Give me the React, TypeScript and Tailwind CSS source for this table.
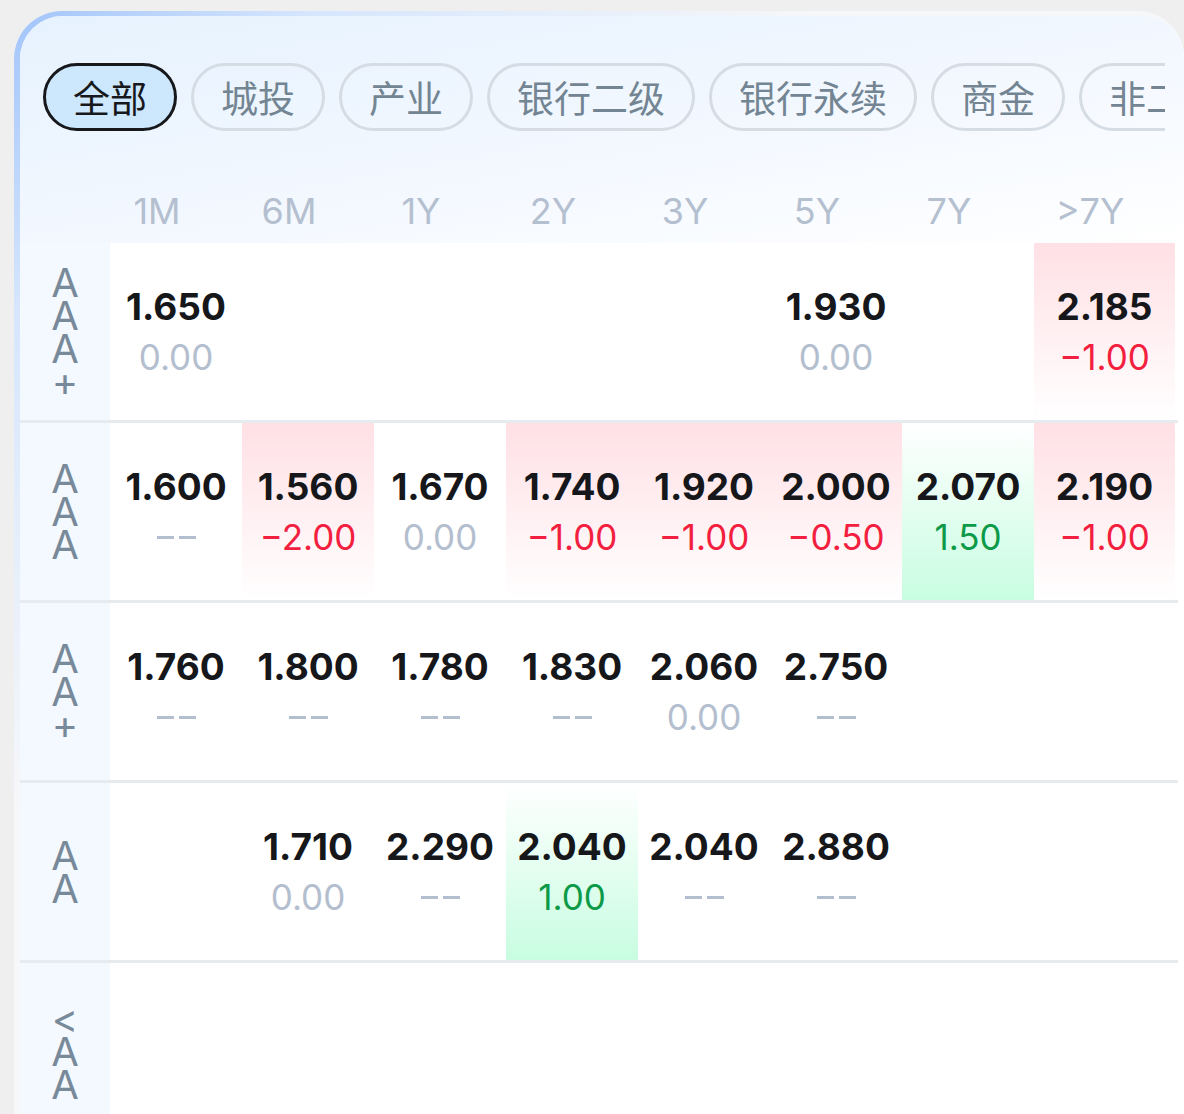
import React from "react";

type Cell = { v: string; d: string; bg?: "red" | "green" } | null;

const tabs = ["全部", "城投", "产业", "银行二级", "银行永续", "商金", "非二永"];
const cols = ["1M", "6M", "1Y", "2Y", "3Y", "5Y", "7Y", ">7Y"];

const rows: { label: string[]; cells: Cell[] }[] = [
  {
    label: ["A", "A", "A", "+"],
    cells: [
      { v: "1.650", d: "0.00" },
      null,
      null,
      null,
      null,
      { v: "1.930", d: "0.00" },
      null,
      { v: "2.185", d: "−1.00", bg: "red" },
    ],
  },
  {
    label: ["A", "A", "A"],
    cells: [
      { v: "1.600", d: "--" },
      { v: "1.560", d: "−2.00", bg: "red" },
      { v: "1.670", d: "0.00" },
      { v: "1.740", d: "−1.00", bg: "red" },
      { v: "1.920", d: "−1.00", bg: "red" },
      { v: "2.000", d: "−0.50", bg: "red" },
      { v: "2.070", d: "1.50", bg: "green" },
      { v: "2.190", d: "−1.00", bg: "red" },
    ],
  },
  {
    label: ["A", "A", "+"],
    cells: [
      { v: "1.760", d: "--" },
      { v: "1.800", d: "--" },
      { v: "1.780", d: "--" },
      { v: "1.830", d: "--" },
      { v: "2.060", d: "0.00" },
      { v: "2.750", d: "--" },
      null,
      null,
    ],
  },
  {
    label: ["A", "A"],
    cells: [
      null,
      { v: "1.710", d: "0.00" },
      { v: "2.290", d: "--" },
      { v: "2.040", d: "1.00", bg: "green" },
      { v: "2.040", d: "--" },
      { v: "2.880", d: "--" },
      null,
      null,
    ],
  },
  {
    label: ["<", "A", "A"],
    cells: [null, null, null, null, null, null, null, null],
  },
];

// sub value colour: falling red, rising green, unchanged grey
const subColor = (d: string) => {
  if (d.startsWith("−")) return "text-[#f2203e]";
  if (d === "0.00" || d === "--") return "text-[#b3bece]";
  return "text-[#0c9a48]";
};

const App = () => {
  return (
    <div className="h-[1114px] w-full overflow-hidden bg-[#efefef] pl-[14px] pt-[11px] font-['Inter','Noto_Sans_CJK_SC',sans-serif]">
      {/* card border layer */}
      <div className="h-[1140px] rounded-tl-[48px] rounded-tr-[46px] rounded-bl-[40px] bg-[radial-gradient(circle_at_0_0,#a3c5fb_0px,#d6e6fd_300px,#f6f7f9_800px)] pl-[6px] pt-[5px]">
        <div className="h-full overflow-hidden rounded-tl-[43px] rounded-tr-[42px] bg-white">
          {/* tabs + column header */}
          <div className="bg-[linear-gradient(170deg,#e6f2fe_0%,#f3f8ff_55%,#ffffff_100%)] pt-[47px]">
            <div className="ml-[23px] mr-[19px] flex gap-[14px] overflow-hidden">
              {tabs.map((t, i) => (
                <div
                  key={t}
                  className={
                    i === 0
                      ? "flex h-[68px] shrink-0 items-center rounded-full border-[3px] border-[#16181b] bg-[#cde7fd] px-[27px] font-['Noto_Sans_CJK_SC',sans-serif] text-[37px] leading-none text-[#16181b]"
                      : "flex h-[68px] shrink-0 items-center rounded-full border-[3px] border-[#d6dce4] px-[27px] font-['Noto_Sans_CJK_SC',sans-serif] text-[37px] leading-none text-[#738593]"
                  }
                >
                  {t}
                </div>
              ))}
            </div>

            <div className="mt-[48px] flex h-[64px] items-center pl-[71px]">
              {cols.map((c, i) => (
                <div
                  key={c}
                  className={
                    i === cols.length - 1
                      ? "w-[150px] text-center text-[36px] leading-none text-[#b4bfcf]"
                      : "w-[132px] text-center text-[36px] leading-none text-[#b4bfcf]"
                  }
                >
                  {c}
                </div>
              ))}
            </div>
          </div>

          {/* rating rows */}
          {rows.map((row, ri) => (
            <div
              key={ri}
              className="flex h-[180px] w-[1158px] border-b-[3px] border-[#e6ebf0] bg-white"
            >
              <div className="flex w-[90px] shrink-0 flex-col items-center justify-center bg-[#f4f9ff] text-[40px] leading-[33px] text-[#788a99]">
                {row.label.map((l, li) => (
                  <span key={li}>{l}</span>
                ))}
              </div>
              {row.cells.map((cell, ci) => (
                <div
                  key={ci}
                  className={
                    (ci === 7 ? "w-[141px] " : "w-[132px] ") +
                    "flex shrink-0 flex-col items-center justify-center " +
                    (cell?.bg === "red"
                      ? "bg-[linear-gradient(to_bottom,#ffe0e5,#ffffff)]"
                      : cell?.bg === "green"
                      ? "bg-[linear-gradient(to_bottom,#ffffff,#c8fde1)]"
                      : "")
                  }
                >
                  {cell && (
                    <>
                      <span className="text-[37px] font-bold leading-[51px] text-[#16171a]">
                        {cell.v}
                      </span>
                      {cell.d === "--" ? (
                        <span className="flex h-[51px] items-center gap-[5px]">
                          <span className="h-[3px] w-[17px] bg-[#b3bece]" />
                          <span className="h-[3px] w-[17px] bg-[#b3bece]" />
                        </span>
                      ) : (
                        <span className={"text-[35px] leading-[51px] " + subColor(cell.d)}>
                          {cell.d}
                        </span>
                      )}
                    </>
                  )}
                </div>
              ))}
            </div>
          ))}
        </div>
      </div>
    </div>
  );
};

export default App;
